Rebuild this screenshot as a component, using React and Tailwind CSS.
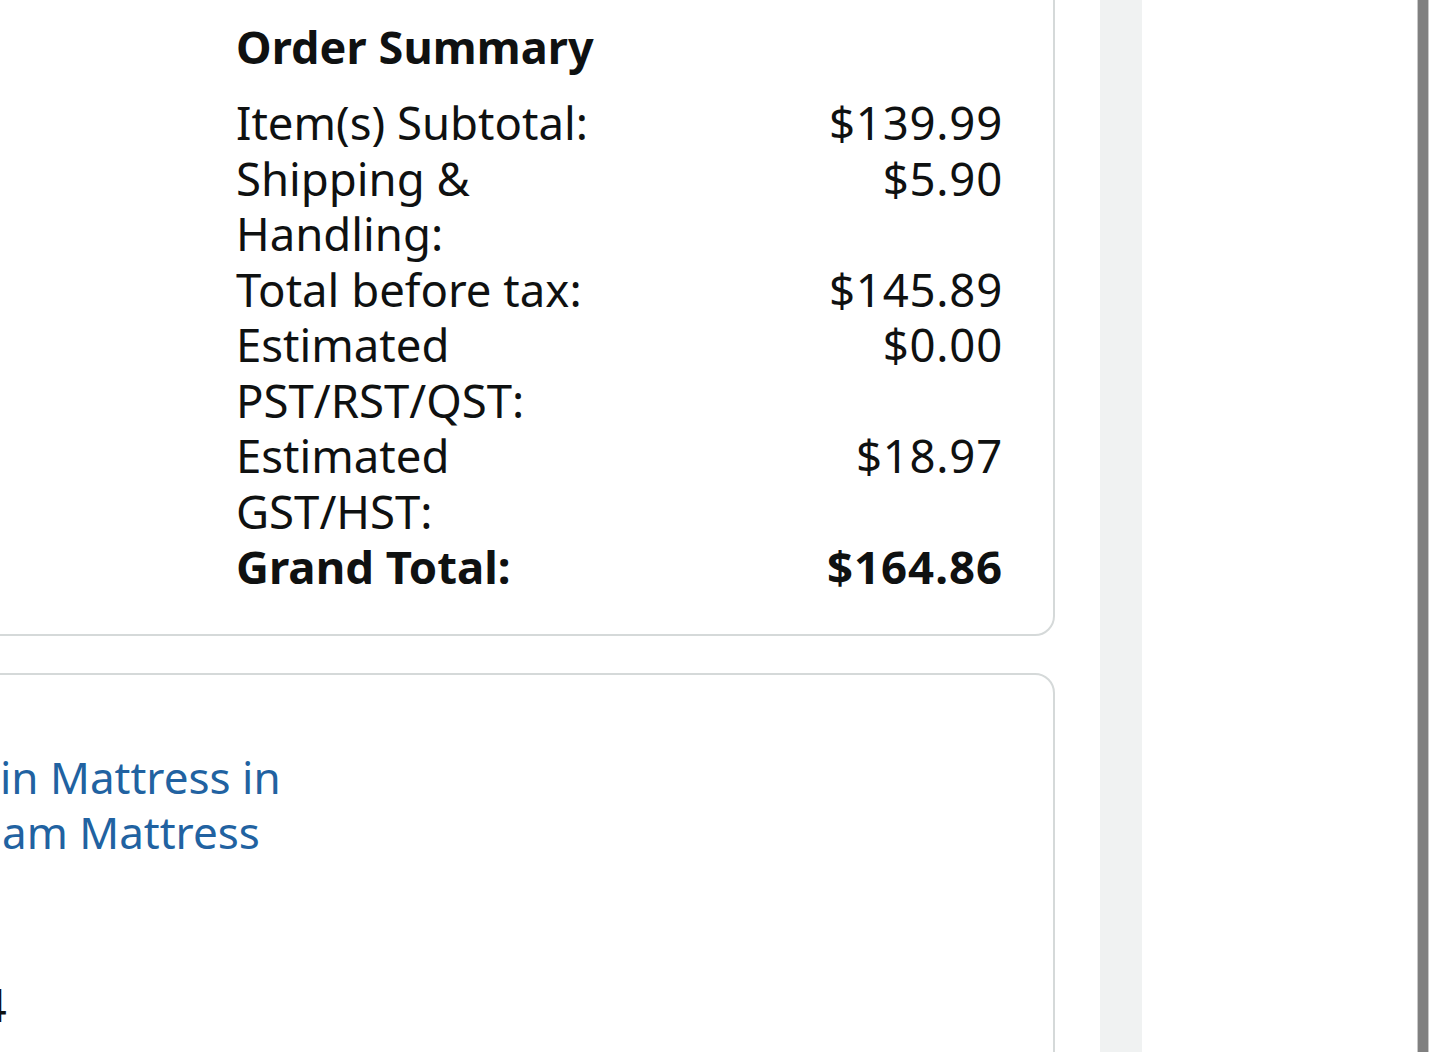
export default function App() {
  const rows = [
    { label: "Item(s) Subtotal:", value: "$139.99" },
    { label: "Shipping & Handling:", value: "$5.90" },
    { label: "Total before tax:", value: "$145.89" },
    { label: "Estimated PST/RST/QST:", value: "$0.00" },
    { label: "Estimated GST/HST:", value: "$18.97" },
  ];
  return (
    <div
      className="w-[1440px] h-[1052px] overflow-hidden bg-white flex text-[#0f1111]"
      style={{ fontFamily: '"Noto Sans", "Open Sans", sans-serif' }}
    >
      {/* main column */}
      <div className="w-[1055px] shrink-0 flex flex-col gap-[37px]">
        {/* Order summary card */}
        <div className="shrink-0 -ml-[20px] -mt-[30px] border-2 border-[#d5d9d9] rounded-b-[20px] pl-[254px] pr-[50px] pt-[52px] pb-[39px]">
          <h2 className="text-[45px] leading-[45px] font-bold mb-[26px] tracking-[0.1px]">Order Summary</h2>
          <div className="flex flex-col text-[45.5px] leading-[55.5px]">
            {rows.map((r) => (
              <div key={r.label} className="flex">
                <div className="w-[390px]">{r.label}</div>
                <div className="flex-1 text-right tracking-[0.8px]">{r.value}</div>
              </div>
            ))}
            <div className="flex font-bold">
              <div className="w-[390px]">Grand Total:</div>
              <div className="flex-1 text-right tracking-[1px]">$164.86</div>
            </div>
          </div>
        </div>
        {/* item card */}
        <div className="shrink-0 -ml-[20px] h-[700px] border-2 border-[#d5d9d9] rounded-t-[20px] pt-[75px] overflow-hidden">
          <div className="text-[44px] leading-[55.5px] text-[#2162a1] whitespace-nowrap">
            <div className="pl-[18px]">in Mattress in</div>
            <div className="pl-[20px]">am Mattress</div>
          </div>
          <div className="mt-[116px] text-[45px] leading-[55.5px] whitespace-nowrap -ml-[1px]">4</div>
        </div>
      </div>
      <div className="w-[45px] shrink-0" />
      <div className="w-[42px] shrink-0 bg-[#f0f2f2]" />
      <div className="w-[275px] shrink-0" />
      <div className="w-[12px] shrink-0 bg-[#808080] border-x border-[#c8c8c8]" />
      <div className="flex-1" />
    </div>
  );
}
